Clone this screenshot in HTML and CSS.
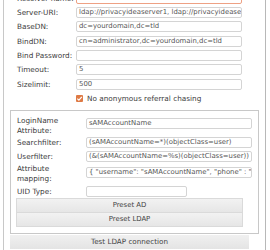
FILE: index.html
```html
<!DOCTYPE html>
<html lang="en">
<head>
  <meta charset="UTF-8">
  <title>LDAP Resolver</title>
  <link rel="stylesheet" href="styles.css">
</head>
<body>

  <div class="dialog">
    <div class="general">
      <label>Resolver name:</label>
      <div class="field field-invalid"></div>
      <label>Server-URI:</label>
      <div class="field">ldap://privacyideaserver1, ldap://privacyideaserver2</div>
      <label>BaseDN:</label>
      <div class="field">dc=yourdomain,dc=tld</div>
      <label>BindDN:</label>
      <div class="field">cn=administrator,dc=yourdomain,dc=tld</div>
      <label>Bind Password:</label>
      <div class="field"></div>
      <label>Timeout:</label>
      <div class="field">5</div>
      <label>Sizelimit:</label>
      <div class="field">500</div>
      <span></span>
      <div class="check">
        <span class="box">
          <svg width="7" height="7" viewBox="0 0 7 7"><path d="M1.3 3.6 L2.9 5.1 L5.8 1.8" fill="none" stroke="#fff" stroke-width="1.2"/></svg>
        </span>
        No anonymous referral chasing
      </div>
    </div>

    <div class="ldap">
      <div class="row tall">
        <label>LoginName<br>Attribute:</label>
        <div class="field top">sAMAccountName</div>
      </div>
      <div class="row">
        <label>Searchfilter:</label>
        <div class="field">(sAMAccountName=*)(objectClass=user)</div>
      </div>
      <div class="row">
        <label>Userfilter:</label>
        <div class="field">(&amp;(sAMAccountName=%s)(objectClass=user))</div>
      </div>
      <div class="row taller">
        <label>Attribute<br>mapping:</label>
        <div class="field top">{ "username": "sAMAccountName", "phone" : "telephoneNumber" }</div>
      </div>
      <div class="row">
        <label>UID Type:</label>
        <div class="field short"></div>
      </div>
      <button class="preset">Preset AD</button>
      <button class="preset">Preset LDAP</button>
    </div>

    <button class="test">Test LDAP connection</button>
  </div>

</body>
</html>
```

FILE: styles.css
```css
body {
  margin: 0;
  background: #fff;
  font-family: 'DejaVu Sans', Verdana, sans-serif;
  font-size: 7.3px;
  color: #3c3c3c;
  overflow: hidden;
}

.dialog {
  display: flow-root;
  margin-left: 3px;
  width: 261px;
  height: 250px;
  border-left: 1px solid #c8c8c8;
  border-right: 1px solid #b8b8b8;
}

.general {
  display: grid;
  grid-template-columns: 59px 166px;
  grid-template-rows: repeat(8, 14.33px);
  align-items: center;
  width: 238px;
  height: 119px;
  margin-top: -9px;
  padding: 0 16px 0 13px;
  border-right: 1px solid #c8c8c8;
}

.field {
  height: 11px;
  box-sizing: border-box;
  border: 1px solid #d4d4d4;
  border-radius: 2px;
  padding: 0 2px;
  font-size: 6.9px;
  line-height: 9px;
  color: #555;
  white-space: nowrap;
  overflow: hidden;
  background: #fff;
}

.field-invalid {
  border-color: #eea184;
}

.check {
  display: flex;
  align-items: center;
  gap: 4px;
}

.check .box {
  width: 7px;
  height: 7px;
  background: #de7a45;
  border-radius: 1px;
  display: flex;
}

.ldap {
  box-sizing: border-box;
  margin-left: 6px;
  width: 249px;
  height: 124px;
  padding: 5px 6px 0 6px;
  border: 1px solid #c8c8c8;
}

.row {
  display: grid;
  grid-template-columns: 69px 166px;
  align-items: center;
  height: 14px;
}

.row.tall {
  height: 19px;
  line-height: 10px;
}

.row.taller {
  height: 21px;
  line-height: 10px;
}

.field.top {
  align-self: start;
  margin-top: 2px;
}

.row.taller .field.top {
  margin-top: 4px;
}

.field.short {
  width: 101px;
}

.preset {
  display: block;
  box-sizing: border-box;
  width: 227px;
  height: 14.5px;
  margin-left: -1px;
  padding: 0;
  font-family: inherit;
  font-size: 6.9px;
  color: #444;
  background: linear-gradient(#f2f2f2, #e6e6e6);
  border: 1px solid #dadada;
}

.preset + .preset {
  border-top: none;
}

.test {
  display: block;
  box-sizing: border-box;
  margin: 1px 0 0 6px;
  width: 239px;
  height: 13.5px;
  padding: 0;
  font-family: inherit;
  font-size: 7.2px;
  color: #444;
  background: linear-gradient(#f0f0f0, #e4e4e4);
  border: none;
}
```
